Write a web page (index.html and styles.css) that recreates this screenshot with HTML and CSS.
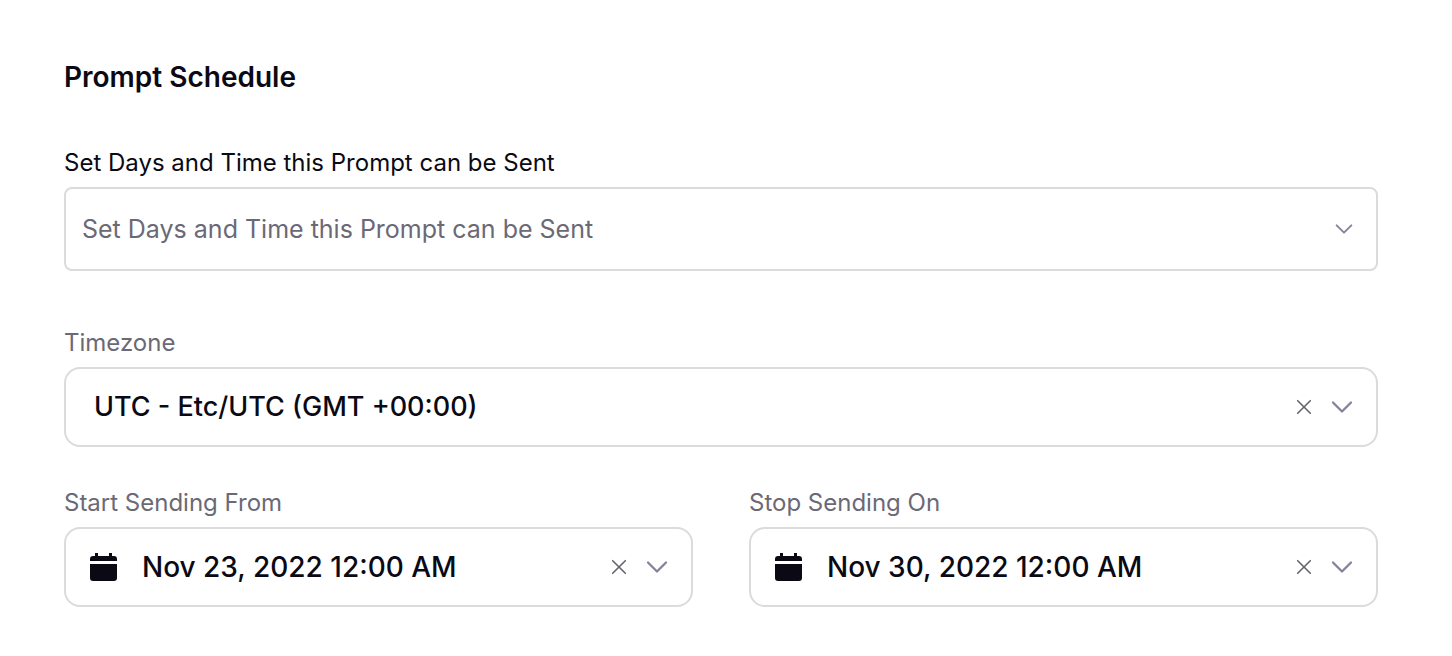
FILE: index.html
```html
<!DOCTYPE html>
<html lang="en">
<head>
<meta charset="utf-8">
<meta name="viewport" content="width=device-width, initial-scale=1">
<title>Prompt Schedule</title>
<link rel="stylesheet" href="styles.css">
</head>
<body>
<svg class="sprite" aria-hidden="true">
  <symbol id="chevron" viewBox="0 0 22 14"><path d="M2 2.500l9 9 9-9" fill="none" stroke="currentColor" stroke-width="2.300" stroke-linecap="round" stroke-linejoin="round"/></symbol>
  <symbol id="clear" viewBox="0 0 16 16"><path d="M1.700 1.700l12.600 12.600M14.300 1.700L1.700 14.300" fill="none" stroke="currentColor" stroke-width="1.600" stroke-linecap="round"/></symbol>
  <symbol id="calendar" viewBox="0 0 28 28"><path d="M0 8V6a3 3 0 0 1 3-3h2V0h3v3h11V0h3v3h2a3 3 0 0 1 3 3v2zM0 11h27v14a3 3 0 0 1-3 3H3a3 3 0 0 1-3-3z" fill="currentColor"/></symbol>
</svg>
<form class="schedule">
  <h1 class="title">Prompt Schedule</h1>
  <div class="field days">
    <label class="label strong" for="days">Set Days and Time this Prompt can be Sent</label>
    <div class="control square">
      <select class="select placeholder" id="days"><option>Set Days and Time this Prompt can be Sent</option></select>
      <svg class="chevron small" aria-hidden="true"><use href="#chevron"/></svg>
    </div>
  </div>
  <div class="field zone">
    <label class="label" for="zone">Timezone</label>
    <div class="control">
      <select class="select" id="zone"><option>UTC - Etc/UTC (GMT +00:00)</option></select>
      <button class="clear" type="button" aria-label="Clear timezone"><svg class="cross" aria-hidden="true"><use href="#clear"/></svg></button>
      <svg class="chevron" aria-hidden="true"><use href="#chevron"/></svg>
    </div>
  </div>
  <div class="dates">
    <div class="field">
      <label class="label" for="start">Start Sending From</label>
      <div class="control dated">
        <svg class="calendar" aria-hidden="true"><use href="#calendar"/></svg>
        <input class="date" id="start" type="text" value="Nov 23, 2022 12:00 AM">
        <button class="clear" type="button" aria-label="Clear start date"><svg class="cross" aria-hidden="true"><use href="#clear"/></svg></button>
        <svg class="chevron" aria-hidden="true"><use href="#chevron"/></svg>
      </div>
    </div>
    <div class="field">
      <label class="label" for="stop">Stop Sending On</label>
      <div class="control dated">
        <svg class="calendar" aria-hidden="true"><use href="#calendar"/></svg>
        <input class="date" id="stop" type="text" value="Nov 30, 2022 12:00 AM">
        <button class="clear" type="button" aria-label="Clear stop date"><svg class="cross" aria-hidden="true"><use href="#clear"/></svg></button>
        <svg class="chevron" aria-hidden="true"><use href="#chevron"/></svg>
      </div>
    </div>
  </div>
</form>
</body>
</html>
```
FILE: styles.css
```css
* { box-sizing: border-box; }
body { margin: 0; background: #fff; color: #0b0a14; font-family: Inter, sans-serif; }
.sprite { display: none; }
.schedule { padding: 60px 74px 48px 64px; }
.title { margin: 0 0 53px; font-size: 28px; line-height: 34px; font-weight: 600; }
.field { display: flex; flex-direction: column; gap: 8px; min-width: 0; }
.days { margin-bottom: 56px; }
.zone { margin-bottom: 40px; }
.dates { display: grid; grid-template-columns: 1fr 1fr; gap: 56px; }
.label { font-size: 24px; line-height: 32px; color: #6b6975; }
.strong { color: #0b0a14; }
.control { display: flex; align-items: center; height: 80px; padding: 0 23px 0 28px; border: 2px solid #dbdbdc; border-radius: 16px; }
.square { height: 84px; padding-left: 16px; border-radius: 8px; }
.dated { padding-left: 24px; }
.select, .date { flex: 1; min-width: 0; height: 100%; padding: 0; border: 0; outline: 0; appearance: none; background: transparent; color: inherit; font: 500 28px/36px Inter, sans-serif; }
.select { font-size: 27px; }
.placeholder { font-size: 25px; font-weight: 400; color: #6b6975; }
.calendar { flex: none; width: 28px; height: 28px; margin-right: 24px; }
.clear { display: flex; flex: none; margin: 0 19px 0 0; padding: 0; border: 0; background: none; color: #65636d; }
.cross { width: 16px; height: 16px; }
.chevron { flex: none; width: 22px; height: 14px; color: #85829a; pointer-events: none; }
.small { width: 18px; height: 12px; }
```
